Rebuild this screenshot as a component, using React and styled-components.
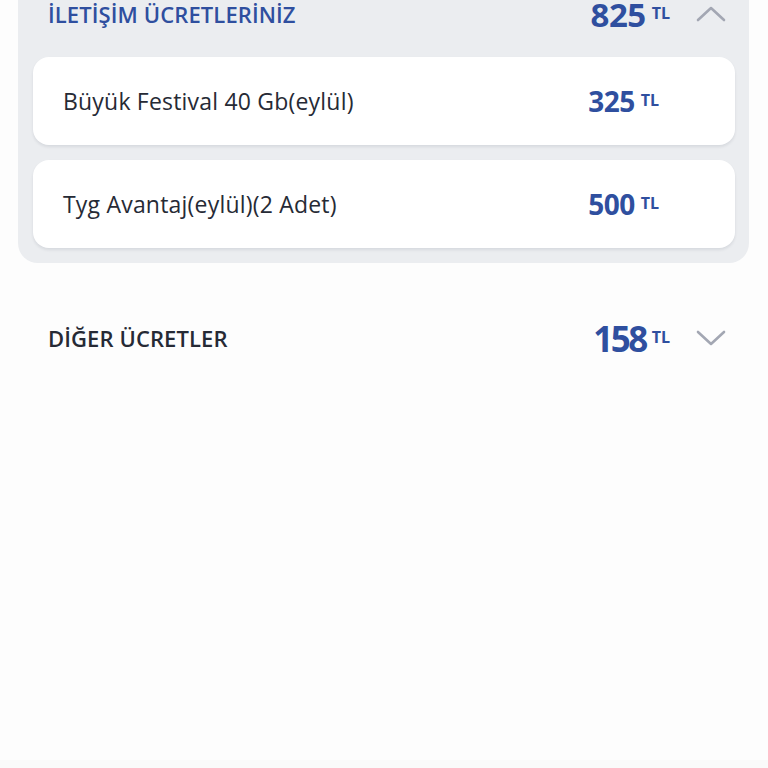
import styled, { createGlobalStyle } from 'styled-components';

const GlobalStyle = createGlobalStyle`
  html, body {
    margin: 0;
    padding: 0;
    background: #fdfdfd;
    font-family: "Open Sans", Lato, sans-serif;
  }
  body {
    overflow: hidden;
  }
`;

const items = [
  { name: 'Büyük Festival 40 Gb(eylül)', amount: 325 },
  { name: 'Tyg Avantaj(eylül)(2 Adet)', amount: 500 },
];

const Chevron = ({ up }) => (
  <svg width="30" height="16" viewBox="0 0 30 16" fill="none">
    <path
      d={up ? 'M2 14 L15 2 L28 14' : 'M2 2 L15 14 L28 2'}
      stroke="#a3a7b3"
      strokeWidth="2.6"
      strokeLinecap="round"
      strokeLinejoin="round"
    />
  </svg>
);

const App = () => {
  return (
    <>
      <GlobalStyle />
      <Page>
        <Panel>
          <Header>
            <Title $open>İLETİŞİM ÜCRETLERİNİZ</Title>
            <HeaderRight>
              <Price>
                <Number $size={33}>825</Number>
                <Currency>TL</Currency>
              </Price>
              <Chevron up />
            </HeaderRight>
          </Header>
          <List>
            {items.map(item => (
              <Card key={item.name}>
                <ItemName>{item.name}</ItemName>
                <Price>
                  <Number $size={28}>{item.amount}</Number>
                  <Currency>TL</Currency>
                </Price>
              </Card>
            ))}
          </List>
        </Panel>

        <Header $plain>
          <Title>DİĞER ÜCRETLER</Title>
          <HeaderRight>
            <Price>
              <Number $size={35} $tight>158</Number>
              <Currency>TL</Currency>
            </Price>
            <Chevron />
          </HeaderRight>
        </Header>
        <Footer />
      </Page>
    </>
  );
};

export default App;

const Page = styled.div`
  height: 768px;
  display: flex;
  flex-direction: column;
  overflow: hidden;
`;

const Panel = styled.section`
  margin: -16px 19px 0 18px;
  padding: 0 14px 15px 15px;
  background: #ebedf0;
  border-radius: 0 0 20px 20px;
`;

const Header = styled.div`
  height: 60px;
  display: flex;
  align-items: center;
  justify-content: space-between;
  padding: ${({ $plain }) => ($plain ? '0 42px 0 48px' : '0 9px 0 15px')};
  margin-top: ${({ $plain }) => ($plain ? '45px' : '0')};
  margin-bottom: ${({ $plain }) => ($plain ? '0' : '13px')};
`;

const Title = styled.h2`
  margin: 0;
  font-size: 22px;
  font-weight: 600;
  letter-spacing: 0.1px;
  color: ${({ $open }) => ($open ? '#2f4f9f' : '#262a35')};
`;

const HeaderRight = styled.div`
  display: flex;
  align-items: center;
  gap: 26px;
`;

const Price = styled.div`
  display: flex;
  align-items: center;
  gap: 6px;
  color: #2f4f9f;
`;

const Number = styled.span`
  font-size: ${({ $size }) => $size}px;
  font-weight: 700;
  line-height: 1;
  letter-spacing: ${({ $tight }) => ($tight ? '-2.5px' : '-0.5px')};
`;

const Currency = styled.span`
  font-size: 16px;
  font-weight: 700;
  line-height: 1;
  margin-bottom: 3px;
`;

const List = styled.div`
  display: flex;
  flex-direction: column;
  gap: 15px;
`;

const Card = styled.div`
  height: 88px;
  display: flex;
  align-items: center;
  justify-content: space-between;
  padding: 0 76px 0 30px;
  background: #ffffff;
  border-radius: 16px;
  box-shadow: 0 2px 3px rgba(40, 50, 70, 0.1);
`;

const ItemName = styled.span`
  font-size: 23px;
  font-weight: 500;
  letter-spacing: 0.2px;
  color: #262a35;
`;

const Footer = styled.div`
  margin-top: auto;
  height: 8px;
  background: #fafafa;
`;
